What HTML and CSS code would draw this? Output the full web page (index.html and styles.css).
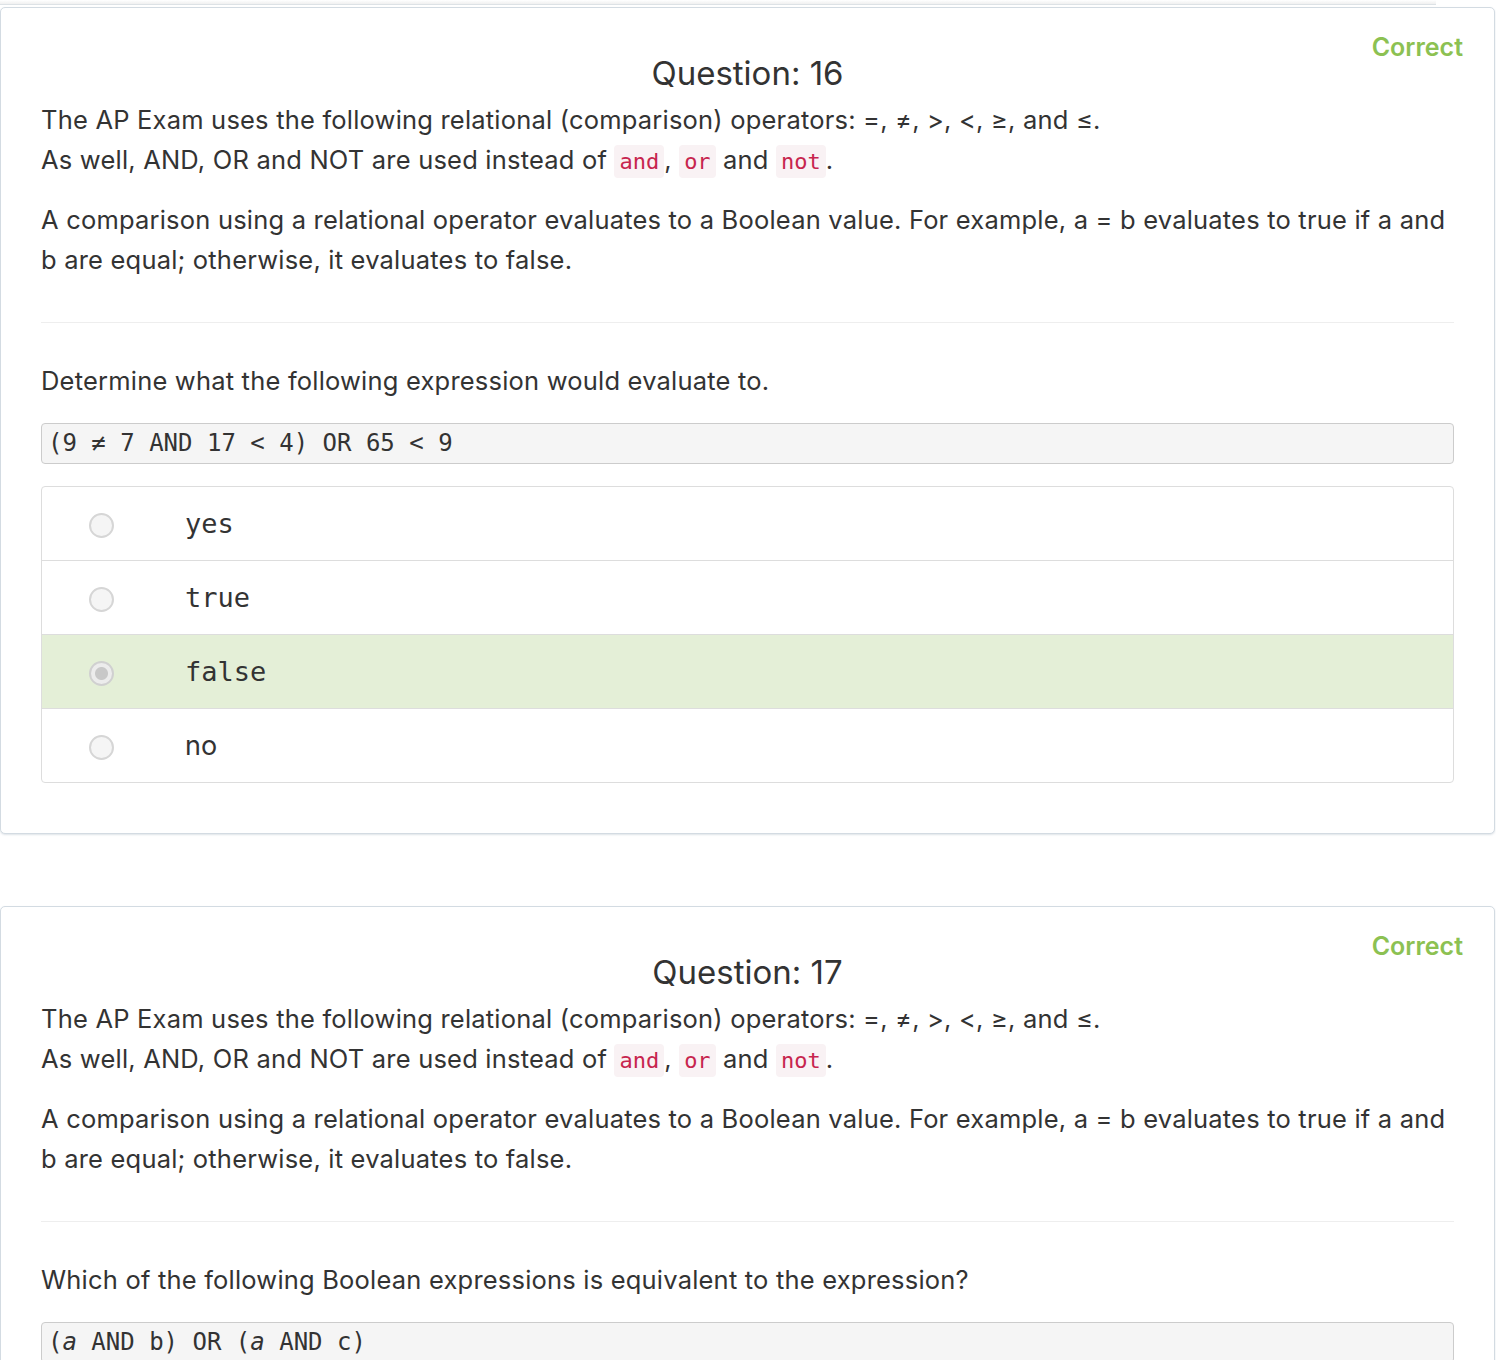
FILE: index.html
```html
<!DOCTYPE html>
<html lang="en">
<head>
<meta charset="utf-8">
<title>Quiz review</title>
<link rel="stylesheet" href="styles.css">
</head>
<body>
<div class="prev-edge"></div>
<main class="quiz">
  <section class="card">
    <div class="status">Correct</div>
    <h2 class="title">Question: 16</h2>
    <div class="prompt">
      <p>The AP Exam uses the following relational (comparison) operators: =, ≠, &gt;, &lt;, ≥, and ≤.<br>As well, AND, OR and NOT are used instead of <code>and</code>, <code>or</code> and <code>not</code>.</p>
      <p>A comparison using a relational operator evaluates to a Boolean value. For example, a = b evaluates to true if a and b are equal; otherwise, it evaluates to false.</p>
    </div>
    <hr class="divider">
    <p class="ask">Determine what the following expression would evaluate to.</p>
    <pre class="expr">(9 ≠ 7 AND 17 &lt; 4) OR 65 &lt; 9</pre>
    <ul class="options">
      <li class="option"><span class="radio"></span><span class="opt-text mono">yes</span></li>
      <li class="option"><span class="radio"></span><span class="opt-text mono">true</span></li>
      <li class="option selected"><span class="radio checked"></span><span class="opt-text mono">false</span></li>
      <li class="option"><span class="radio"></span><span class="opt-text">no</span></li>
    </ul>
  </section>

  <section class="card">
    <div class="status">Correct</div>
    <h2 class="title">Question: 17</h2>
    <div class="prompt">
      <p>The AP Exam uses the following relational (comparison) operators: =, ≠, &gt;, &lt;, ≥, and ≤.<br>As well, AND, OR and NOT are used instead of <code>and</code>, <code>or</code> and <code>not</code>.</p>
      <p>A comparison using a relational operator evaluates to a Boolean value. For example, a = b evaluates to true if a and b are equal; otherwise, it evaluates to false.</p>
    </div>
    <hr class="divider">
    <p class="ask">Which of the following Boolean expressions is equivalent to the expression?</p>
    <pre class="expr">(<i>a</i> AND b) OR (<i>a</i> AND c)</pre>
    <ul class="options">
      <li class="option"><span class="radio"></span><span class="opt-text mono">a AND (b OR c)</span></li>
    </ul>
  </section>
</main>
</body>
</html>
```

FILE: styles.css
```css
* { box-sizing: border-box; }

html, body {
  margin: 0;
  padding: 0;
  background: #ffffff;
}

body {
  font-family: "Inter", "Lato", sans-serif;
  color: #333333;
  font-size: 25.5px;
  letter-spacing: 0.2px;
  line-height: 40px;
}

.prev-edge {
  height: 5px;
  margin-right: 60px;
  border-bottom: 1px solid #dde2e6;
  background: linear-gradient(#ffffff, #f0f0f0);
}

.quiz {
  display: flex;
  flex-direction: column;
  gap: 72px;
  padding-top: 2px;
}

.card {
  position: relative;
  margin-right: 1px;
  background: #ffffff;
  border: 1px solid #d3dbe2;
  border-radius: 5px;
  box-shadow: 0 1px 2px rgba(160, 175, 190, 0.35);
  padding: 47px 40px 50px 40px;
}

.status {
  position: absolute;
  top: 23px;
  right: 31px;
  font-size: 25px;
  letter-spacing: 0;
  line-height: 32px;
  font-weight: 600;
  color: #8cc152;
}

.title {
  margin: 0;
  text-align: center;
  font-size: 33px;
  letter-spacing: 0;
  line-height: 36px;
  font-weight: 400;
  color: #333333;
}

.prompt {
  margin-top: 9px;
}

.prompt p {
  margin: 0 0 20px 0;
}

.prompt p:last-child {
  margin-bottom: 0;
}

code {
  font-family: "DejaVu Sans Mono", "Liberation Mono", monospace;
  font-size: 22px;
  letter-spacing: 0;
  line-height: 1;
  color: #c7254e;
  background: #f9f2f4;
  padding: 4px 5px;
  border-radius: 4px;
}

.divider {
  margin: 42px 0 38px 0;
  border: 0;
  border-top: 1px solid #eeeeee;
  height: 0;
}

.ask {
  margin: 0;
}

.expr {
  margin: 22px 0 0 0;
  height: 41px;
  padding: 0 6px;
  font-family: "DejaVu Sans Mono", "Liberation Mono", monospace;
  font-size: 24px;
  letter-spacing: 0;
  line-height: 38px;
  color: #333333;
  background: #f5f5f5;
  border: 1px solid #cccccc;
  border-radius: 4px;
}

.expr i {
  font-style: italic;
}

.options {
  list-style: none;
  margin: 22px 0 0 0;
  padding: 0;
  border: 1px solid #dddddd;
  border-radius: 4px;
  overflow: hidden;
}

.option {
  display: flex;
  align-items: center;
  height: 74px;
  padding-left: 47px;
  border-top: 1px solid #dddddd;
}

.option:first-child {
  border-top: 0;
  height: 73px;
}

.option.selected {
  background: #e4efd7;
}

.radio {
  flex: none;
  width: 25px;
  height: 25px;
  border-radius: 50%;
  border: 2px solid #d6d6d6;
  background: #f5f5f5;
  margin-top: 4px;
}

.radio.checked {
  border-color: #d0d0d0;
  background: radial-gradient(circle, #c8c8c8 0 6px, #ececec 7px);
}

.opt-text {
  margin-left: 71px;
  font-size: 27px;
  letter-spacing: 0;
  color: #333333;
}

.opt-text.mono {
  font-family: "DejaVu Sans Mono", "Liberation Mono", monospace;
  font-size: 27px;
}
```
